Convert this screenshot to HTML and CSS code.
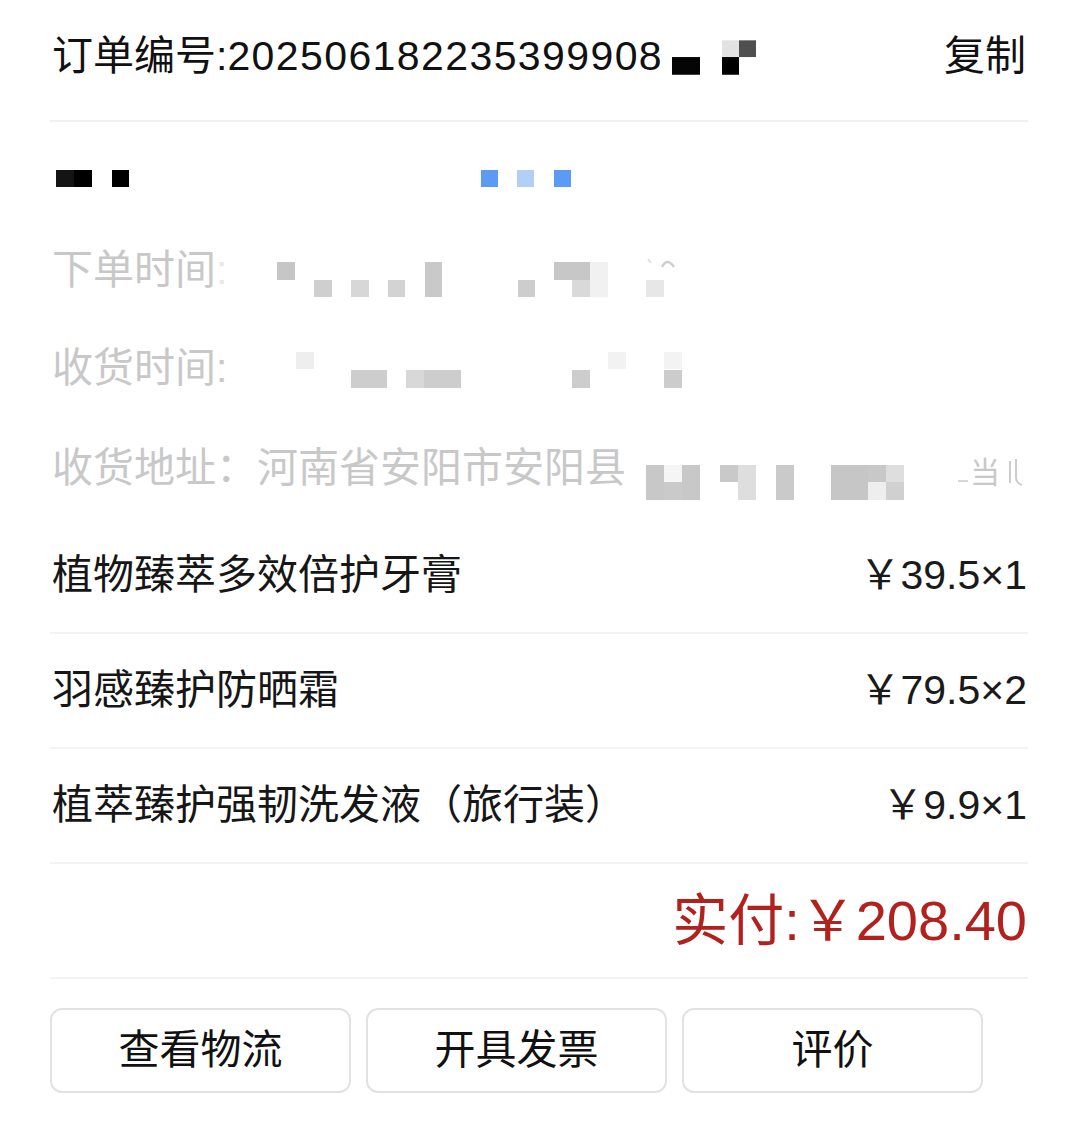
FILE: index.html
```html
<!DOCTYPE html>
<html lang="zh-CN">
<head>
<meta charset="utf-8">
<title>订单详情</title>
<link rel="stylesheet" href="styles.css">
</head>
<body>
<div class="page">
  <div class="header row-rel">
    <div class="order-no">订单编号:<span class="digits">202506182235399908</span></div>
    <div class="copy">复制</div>
    <svg class="mosaic" viewBox="0 0 978 122" preserveAspectRatio="none">
      <rect x="622" y="58" width="28" height="18" fill="#050505"/>
      <rect x="672" y="41" width="17" height="17" fill="#e2e2e2"/>
      <rect x="689" y="41" width="17" height="17" fill="#4f4f4f"/>
      <rect x="672" y="58" width="17" height="18" fill="#000"/>
    </svg>
  </div>

  <div class="status row-rel">
    <svg class="mosaic" viewBox="0 0 978 99" preserveAspectRatio="none">
      <rect x="6" y="48" width="18" height="17" fill="#141414"/>
      <rect x="24" y="48" width="18" height="17" fill="#000"/>
      <rect x="62" y="48" width="17" height="17" fill="#000"/>
      <rect x="431" y="48" width="17" height="17" fill="#5c9bf4"/>
      <rect x="467" y="48" width="17" height="17" fill="#b4cff6"/>
      <rect x="504" y="48" width="17" height="17" fill="#5c9bf4"/>
    </svg>
  </div>

  <div class="info row-rel h98">
    <span>下单时间<span class="faint">:</span></span>
    <svg class="mosaic" viewBox="0 0 978 98" preserveAspectRatio="none">
      <rect x="227" y="41" width="18" height="18" fill="#c6c6c6"/>
      <rect x="264" y="59" width="18" height="17" fill="#cfcfcf"/>
      <rect x="301" y="59" width="18" height="17" fill="#d7d7d7"/>
      <rect x="338" y="59" width="17" height="17" fill="#d3d3d3"/>
      <rect x="375" y="41" width="17" height="35" fill="#c9c9c9"/>
      <rect x="468" y="59" width="17" height="17" fill="#cdcdcd"/>
      <rect x="504" y="41" width="36" height="18" fill="#c7c7c7"/>
      <rect x="522" y="59" width="18" height="17" fill="#d9d9d9"/>
      <rect x="540" y="41" width="18" height="35" fill="#f1f1f1"/>
      <rect x="596" y="59" width="18" height="17" fill="#e7e7e7"/>
      <path d="M612 46 Q617 36 624 46" stroke="#cfcfcf" stroke-width="2.5" fill="none"/>
      <path d="M598 38 L601 42" stroke="#e0e0e0" stroke-width="2" fill="none"/>
    </svg>
  </div>

  <div class="info row-rel h98">
    <span>收货时间:</span>
    <svg class="mosaic" viewBox="0 0 978 98" preserveAspectRatio="none">
      <rect x="246" y="33" width="18" height="17" fill="#eeeeee"/>
      <rect x="301" y="51" width="36" height="18" fill="#cdcdcd"/>
      <rect x="356" y="51" width="18" height="18" fill="#d8d8d8"/>
      <rect x="374" y="51" width="37" height="18" fill="#cdcdcd"/>
      <rect x="522" y="51" width="18" height="18" fill="#cdcdcd"/>
      <rect x="558" y="33" width="18" height="17" fill="#f2f2f2"/>
      <rect x="614" y="33" width="18" height="17" fill="#f3f3f3"/>
      <rect x="614" y="51" width="18" height="18" fill="#cccccc"/>
    </svg>
  </div>

  <div class="info row-rel h102">
    <span>收货地址：河南省安阳市安阳县</span>
    <svg class="mosaic" viewBox="0 0 978 102" preserveAspectRatio="none">
      <rect x="596" y="48" width="18" height="35" fill="#c8c8c8"/>
      <rect x="614" y="48" width="18" height="17" fill="#f5f5f5"/>
      <rect x="614" y="65" width="18" height="18" fill="#cacaca"/>
      <rect x="632" y="48" width="18" height="35" fill="#c8c8c8"/>
      <rect x="670" y="48" width="18" height="17" fill="#c9c9c9"/>
      <rect x="688" y="48" width="18" height="35" fill="#dedede"/>
      <rect x="726" y="48" width="18" height="35" fill="#cacaca"/>
      <rect x="781" y="48" width="37" height="35" fill="#c6c6c6"/>
      <rect x="818" y="48" width="18" height="17" fill="#c8c8c8"/>
      <rect x="818" y="65" width="18" height="18" fill="#eeeeee"/>
      <rect x="836" y="48" width="18" height="17" fill="#dedede"/>
      <rect x="836" y="65" width="18" height="18" fill="#d0d0d0"/>
      <path d="M908 64 L918 64" stroke="#d6d6d6" stroke-width="2" fill="none"/>
      <text x="920" y="66" font-size="30" fill="#c8c8c8" font-family="Noto Sans CJK SC, sans-serif">当</text>
      <path d="M960 44 L960 66 M966 42 L966 60 Q966 66 972 68" stroke="#cdcdcd" stroke-width="2" fill="none"/>
    </svg>
  </div>

  <div class="item">
    <span>植物臻萃多效倍护牙膏</span>
    <span class="price">￥39.5×1</span>
  </div>
  <div class="item">
    <span>羽感臻护防晒霜</span>
    <span class="price">￥79.5×2</span>
  </div>
  <div class="item">
    <span>植萃臻护强韧洗发液（旅行装）</span>
    <span class="price">￥9.9×1</span>
  </div>

  <div class="total">实付:￥208.40</div>

  <div class="actions">
    <div class="btn">查看物流</div>
    <div class="btn">开具发票</div>
    <div class="btn">评价</div>
  </div>
</div>
</body>
</html>
```

FILE: styles.css
```css
* { box-sizing: border-box; }
html, body {
  margin: 0;
  padding: 0;
  background: #ffffff;
}
body {
  font-family: "Liberation Sans", "Noto Sans CJK SC", sans-serif;
  font-size: 41px;
  line-height: 1;
  color: #161616;
}
.page {
  padding: 0 52px 0 50px;
}
.row-rel {
  position: relative;
}
.mosaic {
  position: absolute;
  left: 0;
  top: 0;
  width: 100%;
  height: 100%;
  overflow: hidden;
}
.header {
  height: 122px;
  padding: 0 0 8px 2px;
  display: flex;
  align-items: center;
  justify-content: space-between;
  border-bottom: 2px solid #f1f1f1;
  color: #111;
}
.digits {
  letter-spacing: 1.4px;
}
.copy {
  padding-right: 2px;
}
.status {
  height: 99px;
}
.info {
  display: flex;
  align-items: center;
  padding-left: 2px;
  color: #c8c8c8;
}
.h98 { height: 98px; }
.h102 { height: 102px; }
.faint { color: #e8e8e8; }
.item {
  height: 115px;
  display: flex;
  align-items: center;
  justify-content: space-between;
  padding: 0 1px 0 2px;
  border-bottom: 2px solid #f3f3f3;
}
.price {
  color: #1a1a1a;
}
.total {
  height: 115px;
  display: flex;
  align-items: center;
  justify-content: flex-end;
  padding-right: 1px;
  font-size: 56px;
  color: #b1211d;
  border-bottom: 2px solid #f3f3f3;
}
.actions {
  display: flex;
  gap: 15px;
  margin-top: 29px;
}
.btn {
  width: 301px;
  height: 85px;
  border: 2px solid #e2e2e2;
  border-radius: 12px;
  display: flex;
  align-items: center;
  justify-content: center;
  color: #111;
}
```
